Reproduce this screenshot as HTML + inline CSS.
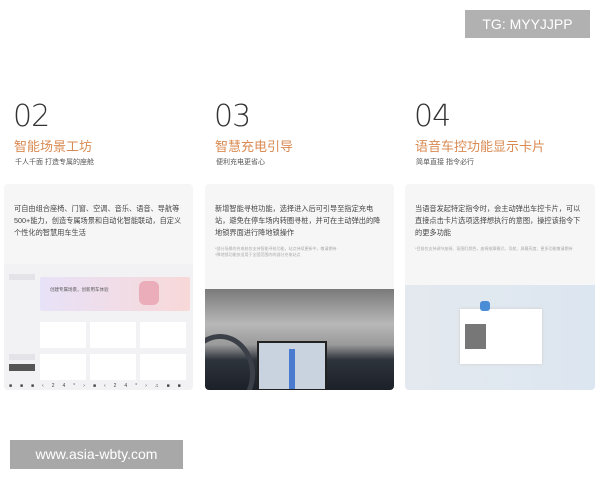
<!DOCTYPE html>
<html><head><meta charset="utf-8"><style>
*{margin:0;padding:0;box-sizing:border-box}
body{width:600px;height:480px;background:#fff;position:relative;overflow:hidden;font-family:"Liberation Sans","Noto Sans CJK SC",sans-serif;color:#333}
.a{position:absolute}
.num{font-size:30px;font-weight:300;color:#333;font-family:"DejaVu Sans","Liberation Sans",sans-serif;font-weight:200;letter-spacing:-1px}
.tt{font-size:13px;color:#d98a52}
.st{font-size:7px;color:#555}
.card{background:#f6f6f6;border-radius:4px;overflow:hidden}
.ct{font-size:7.2px;line-height:12px;color:#444}
.fn{font-size:4px;line-height:6px;color:#aaa}
</style></head><body>
<div class="a" style="left:465px;top:10px;width:125px;height:28px;background:#b1b1b1;color:#fff;font-size:14px;line-height:28px;text-align:center">TG: MYYJJPP</div>

<div class="a num" style="left:13px;top:99px">02</div>
<div class="a tt" style="left:14px;top:136px">智能场景工坊</div>
<div class="a st" style="left:15px;top:157px">千人千面 打造专属的座舱</div>

<div class="a num" style="left:214px;top:99px">03</div>
<div class="a tt" style="left:215px;top:136px">智慧充电引导</div>
<div class="a st" style="left:216px;top:157px">便利充电更省心</div>

<div class="a num" style="left:414px;top:99px">04</div>
<div class="a tt" style="left:415px;top:136px">语音车控功能显示卡片</div>
<div class="a st" style="left:416px;top:157px">简单直接 指令必行</div>

<div class="a card" style="left:4px;top:184px;width:189px;height:206px">
 <div class="a ct" style="left:10px;top:19px;width:172px">可自由组合座椅、门窗、空调、音乐、语音、导航等500+能力，创造专属场景和自动化智能联动，自定义个性化的智慧用车生活</div>
 <div class="a" style="left:0;top:80px;width:189px;height:126px;background:#f2f2f4">
  <div class="a" style="left:36px;top:13px;width:150px;height:34px;background:linear-gradient(90deg,#e8e2f8,#f8d8d8);border-radius:2px"></div>
  <div class="a" style="left:46px;top:23px;font-size:4.5px;color:#555">创建专属场景，创新用车体验</div>
  <div class="a" style="left:135px;top:17px;width:20px;height:24px;background:#e69aa8;border-radius:6px;opacity:.7"></div>
  <div class="a" style="left:36px;top:58px;width:46px;height:26px;background:#fff"></div>
  <div class="a" style="left:86px;top:58px;width:46px;height:26px;background:#fff"></div>
  <div class="a" style="left:136px;top:58px;width:46px;height:26px;background:#fff"></div>
  <div class="a" style="left:36px;top:90px;width:46px;height:26px;background:#fff"></div>
  <div class="a" style="left:86px;top:90px;width:46px;height:26px;background:#fff"></div>
  <div class="a" style="left:136px;top:90px;width:46px;height:26px;background:#fff"></div>
  <div class="a" style="left:5px;top:10px;width:26px;height:6px;background:#e4e4e8"></div>
  <div class="a" style="left:5px;top:90px;width:26px;height:6px;background:#e4e4e8"></div>
  <div class="a" style="left:5px;top:100px;width:26px;height:7px;background:#555"></div>
  <div class="a" style="left:0;top:119px;width:189px;height:7px;font-size:5px;color:#444;letter-spacing:8px;padding-left:5px">■■■‹24°›■‹24°›♫■■</div>
 </div>
</div>

<div class="a card" style="left:205px;top:184px;width:189px;height:206px">
 <div class="a ct" style="left:10px;top:19px;width:172px">新增智能寻桩功能，选择进入后可引导至指定充电站，避免在停车场内转圈寻桩，并可在主动弹出的降地锁界面进行降地锁操作</div>
 <div class="a fn" style="left:10px;top:62px;width:172px">*部分场景的充电桩仅支持智能寻桩功能，站点持续更新中，敬请期待<br>*降地锁功能仅适用于全国范围内的部分充电站点</div>
 <div class="a" style="left:0;top:105px;width:189px;height:101px;background:linear-gradient(180deg,#7a7a7a 0%,#b8b8b8 35%,#9a9a9a 55%,#2e343c 70%,#1c2028 100%)"></div>
 <div class="a" style="left:52px;top:157px;width:70px;height:50px;background:#c9d3e0;border:2px solid #222"></div>
 <div class="a" style="left:84px;top:165px;width:6px;height:40px;background:#4a7bd0"></div>
 <div class="a" style="left:-20px;top:150px;width:70px;height:80px;border:5px solid #3a3f48;border-radius:50%"></div>
</div>

<div class="a card" style="left:405px;top:184px;width:190px;height:206px">
 <div class="a ct" style="left:10px;top:19px;width:172px">当语音发起特定指令时，会主动弹出车控卡片，可以直接点击卡片选项选择想执行的意图，操控该指令下的更多功能</div>
 <div class="a fn" style="left:10px;top:62px;width:172px">*目前仅支持调节座椅、氛围灯颜色、座椅按摩模式、导航、屏幕亮度、更多功能敬请期待</div>
 <div class="a" style="left:0;top:101px;width:190px;height:105px;background:linear-gradient(90deg,#e4e9ef,#dce6f0)"></div>
 <div class="a" style="left:55px;top:125px;width:82px;height:55px;background:#fff;box-shadow:0 0 3px #ccc"></div>
 <div class="a" style="left:60px;top:140px;width:21px;height:25px;background:#777"></div>
 <div class="a" style="left:75px;top:117px;width:10px;height:10px;background:#4a8dd6;border-radius:3px"></div>
</div>

<div class="a" style="left:10px;top:440px;width:173px;height:29px;background:#a8a8a8;color:#fff;font-size:14px;line-height:29px;text-align:center">www.asia-wbty.com</div>
</body></html>
